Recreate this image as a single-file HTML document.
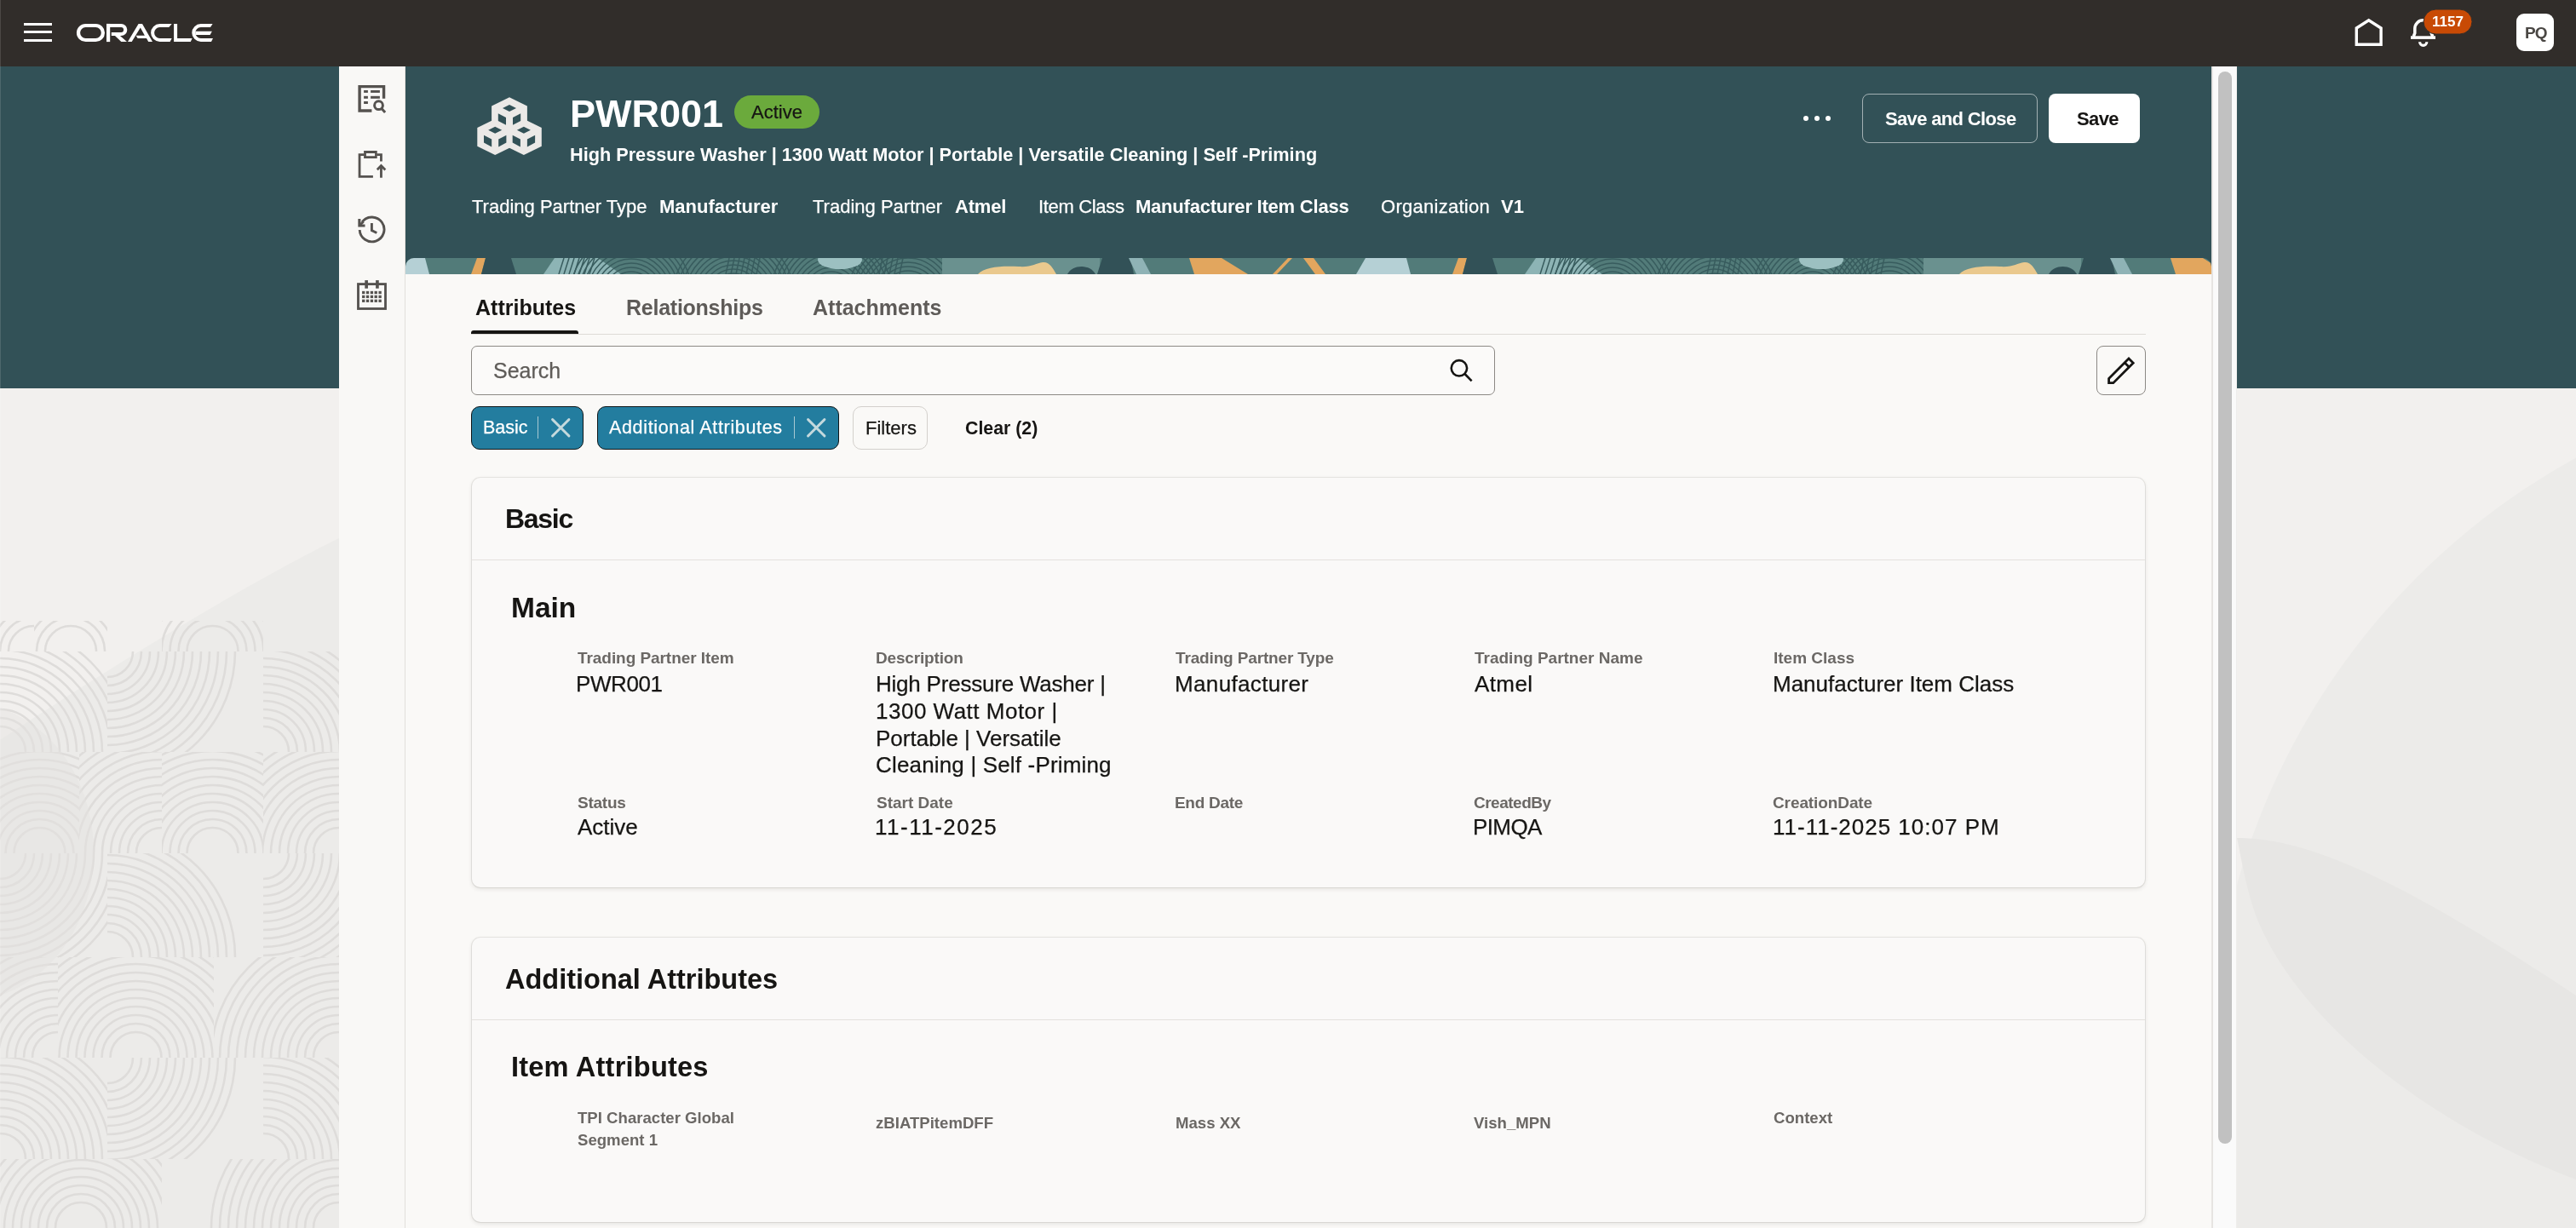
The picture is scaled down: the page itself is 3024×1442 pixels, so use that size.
<!DOCTYPE html>
<html><head><meta charset="utf-8"><title>PWR001</title>
<style>
html,body{margin:0;padding:0}
body{width:3024px;height:1442px;overflow:hidden;position:relative;background:#EDEBE9;font-family:"Liberation Sans",sans-serif}
.a{position:absolute}
.t{position:absolute;white-space:nowrap;line-height:1;-webkit-font-smoothing:antialiased;will-change:transform}
svg.a{overflow:visible}
</style></head><body>
<div class="a" style="left:0px;top:0px;width:3024px;height:78px;background:#312D2A"></div>
<div class="a" style="left:0px;top:78px;width:3024px;height:378px;background:#325157"></div>
<svg class="a" style="left:0;top:456px" width="398" height="986" viewBox="0 456 398 986"><rect x="0" y="456" width="398" height="986" fill="#F2F0EE"/><path d="M398,600 L398,632 C300,680 150,770 0,869 L0,1442 L398,1442 Z" fill="#ECEBE9"/><clipPath id="c0_729"><rect x="0" y="729" width="40" height="36"/></clipPath><g clip-path="url(#c0_729)" fill="none" stroke="#DEDCDA" stroke-width="2.6"><circle cx="40" cy="765" r="30"/><circle cx="40" cy="765" r="40"/><circle cx="40" cy="765" r="50"/><circle cx="40" cy="765" r="60"/><circle cx="40" cy="765" r="70"/><circle cx="40" cy="765" r="80"/><circle cx="40" cy="765" r="90"/><circle cx="40" cy="765" r="100"/><circle cx="40" cy="765" r="110"/><circle cx="40" cy="765" r="120"/><circle cx="40" cy="765" r="130"/><circle cx="40" cy="765" r="140"/><circle cx="40" cy="765" r="150"/></g><clipPath id="c40_729"><rect x="40" y="729" width="86" height="36"/></clipPath><g clip-path="url(#c40_729)" fill="none" stroke="#DEDCDA" stroke-width="2.6"><circle cx="83.0" cy="765" r="30"/><circle cx="83.0" cy="765" r="40"/><circle cx="83.0" cy="765" r="50"/><circle cx="83.0" cy="765" r="60"/><circle cx="83.0" cy="765" r="70"/><circle cx="83.0" cy="765" r="80"/><circle cx="83.0" cy="765" r="90"/><circle cx="83.0" cy="765" r="100"/><circle cx="83.0" cy="765" r="110"/><circle cx="83.0" cy="765" r="120"/><circle cx="83.0" cy="765" r="130"/><circle cx="83.0" cy="765" r="140"/><circle cx="83.0" cy="765" r="150"/></g><clipPath id="c190_729"><rect x="190" y="729" width="119" height="36"/></clipPath><g clip-path="url(#c190_729)" fill="none" stroke="#DEDCDA" stroke-width="2.6"><circle cx="249.5" cy="765" r="30"/><circle cx="249.5" cy="765" r="40"/><circle cx="249.5" cy="765" r="50"/><circle cx="249.5" cy="765" r="60"/><circle cx="249.5" cy="765" r="70"/><circle cx="249.5" cy="765" r="80"/><circle cx="249.5" cy="765" r="90"/><circle cx="249.5" cy="765" r="100"/><circle cx="249.5" cy="765" r="110"/><circle cx="249.5" cy="765" r="120"/><circle cx="249.5" cy="765" r="130"/><circle cx="249.5" cy="765" r="140"/><circle cx="249.5" cy="765" r="150"/></g><clipPath id="c0_765"><rect x="0" y="765" width="126" height="118"/></clipPath><g clip-path="url(#c0_765)" fill="none" stroke="#DEDCDA" stroke-width="2.6"><circle cx="0" cy="883" r="30"/><circle cx="0" cy="883" r="40"/><circle cx="0" cy="883" r="50"/><circle cx="0" cy="883" r="60"/><circle cx="0" cy="883" r="70"/><circle cx="0" cy="883" r="80"/><circle cx="0" cy="883" r="90"/><circle cx="0" cy="883" r="100"/><circle cx="0" cy="883" r="110"/><circle cx="0" cy="883" r="120"/><circle cx="0" cy="883" r="130"/><circle cx="0" cy="883" r="140"/><circle cx="0" cy="883" r="150"/></g><clipPath id="c126_765"><rect x="126" y="765" width="183" height="118"/></clipPath><g clip-path="url(#c126_765)" fill="none" stroke="#DEDCDA" stroke-width="2.6"><circle cx="126" cy="765" r="30"/><circle cx="126" cy="765" r="40"/><circle cx="126" cy="765" r="50"/><circle cx="126" cy="765" r="60"/><circle cx="126" cy="765" r="70"/><circle cx="126" cy="765" r="80"/><circle cx="126" cy="765" r="90"/><circle cx="126" cy="765" r="100"/><circle cx="126" cy="765" r="110"/><circle cx="126" cy="765" r="120"/><circle cx="126" cy="765" r="130"/><circle cx="126" cy="765" r="140"/><circle cx="126" cy="765" r="150"/></g><clipPath id="c309_765"><rect x="309" y="765" width="89" height="118"/></clipPath><g clip-path="url(#c309_765)" fill="none" stroke="#DEDCDA" stroke-width="2.6"><circle cx="309" cy="883" r="30"/><circle cx="309" cy="883" r="40"/><circle cx="309" cy="883" r="50"/><circle cx="309" cy="883" r="60"/><circle cx="309" cy="883" r="70"/><circle cx="309" cy="883" r="80"/><circle cx="309" cy="883" r="90"/><circle cx="309" cy="883" r="100"/><circle cx="309" cy="883" r="110"/><circle cx="309" cy="883" r="120"/><circle cx="309" cy="883" r="130"/><circle cx="309" cy="883" r="140"/><circle cx="309" cy="883" r="150"/></g><clipPath id="c0_883"><rect x="0" y="883" width="93" height="119"/></clipPath><g clip-path="url(#c0_883)" fill="none" stroke="#DEDCDA" stroke-width="2.6"><circle cx="46.5" cy="1002" r="30"/><circle cx="46.5" cy="1002" r="40"/><circle cx="46.5" cy="1002" r="50"/><circle cx="46.5" cy="1002" r="60"/><circle cx="46.5" cy="1002" r="70"/><circle cx="46.5" cy="1002" r="80"/><circle cx="46.5" cy="1002" r="90"/><circle cx="46.5" cy="1002" r="100"/><circle cx="46.5" cy="1002" r="110"/><circle cx="46.5" cy="1002" r="120"/><circle cx="46.5" cy="1002" r="130"/><circle cx="46.5" cy="1002" r="140"/><circle cx="46.5" cy="1002" r="150"/></g><clipPath id="c93_883"><rect x="93" y="883" width="97" height="119"/></clipPath><g clip-path="url(#c93_883)" fill="none" stroke="#DEDCDA" stroke-width="2.6"><circle cx="190" cy="1002" r="30"/><circle cx="190" cy="1002" r="40"/><circle cx="190" cy="1002" r="50"/><circle cx="190" cy="1002" r="60"/><circle cx="190" cy="1002" r="70"/><circle cx="190" cy="1002" r="80"/><circle cx="190" cy="1002" r="90"/><circle cx="190" cy="1002" r="100"/><circle cx="190" cy="1002" r="110"/><circle cx="190" cy="1002" r="120"/><circle cx="190" cy="1002" r="130"/><circle cx="190" cy="1002" r="140"/><circle cx="190" cy="1002" r="150"/></g><clipPath id="c190_883"><rect x="190" y="883" width="119" height="119"/></clipPath><g clip-path="url(#c190_883)" fill="none" stroke="#DEDCDA" stroke-width="2.6"><circle cx="249.5" cy="1002" r="30"/><circle cx="249.5" cy="1002" r="40"/><circle cx="249.5" cy="1002" r="50"/><circle cx="249.5" cy="1002" r="60"/><circle cx="249.5" cy="1002" r="70"/><circle cx="249.5" cy="1002" r="80"/><circle cx="249.5" cy="1002" r="90"/><circle cx="249.5" cy="1002" r="100"/><circle cx="249.5" cy="1002" r="110"/><circle cx="249.5" cy="1002" r="120"/><circle cx="249.5" cy="1002" r="130"/><circle cx="249.5" cy="1002" r="140"/><circle cx="249.5" cy="1002" r="150"/></g><clipPath id="c309_883"><rect x="309" y="883" width="89" height="119"/></clipPath><g clip-path="url(#c309_883)" fill="none" stroke="#DEDCDA" stroke-width="2.6"><circle cx="398" cy="1002" r="30"/><circle cx="398" cy="1002" r="40"/><circle cx="398" cy="1002" r="50"/><circle cx="398" cy="1002" r="60"/><circle cx="398" cy="1002" r="70"/><circle cx="398" cy="1002" r="80"/><circle cx="398" cy="1002" r="90"/><circle cx="398" cy="1002" r="100"/><circle cx="398" cy="1002" r="110"/><circle cx="398" cy="1002" r="120"/><circle cx="398" cy="1002" r="130"/><circle cx="398" cy="1002" r="140"/><circle cx="398" cy="1002" r="150"/></g><clipPath id="c0_1002"><rect x="0" y="1002" width="126" height="122"/></clipPath><g clip-path="url(#c0_1002)" fill="none" stroke="#DEDCDA" stroke-width="2.6"><circle cx="0" cy="1002" r="30"/><circle cx="0" cy="1002" r="40"/><circle cx="0" cy="1002" r="50"/><circle cx="0" cy="1002" r="60"/><circle cx="0" cy="1002" r="70"/><circle cx="0" cy="1002" r="80"/><circle cx="0" cy="1002" r="90"/><circle cx="0" cy="1002" r="100"/><circle cx="0" cy="1002" r="110"/><circle cx="0" cy="1002" r="120"/><circle cx="0" cy="1002" r="130"/><circle cx="0" cy="1002" r="140"/><circle cx="0" cy="1002" r="150"/></g><clipPath id="c126_1002"><rect x="126" y="1002" width="183" height="122"/></clipPath><g clip-path="url(#c126_1002)" fill="none" stroke="#DEDCDA" stroke-width="2.6"><circle cx="126" cy="1124" r="30"/><circle cx="126" cy="1124" r="40"/><circle cx="126" cy="1124" r="50"/><circle cx="126" cy="1124" r="60"/><circle cx="126" cy="1124" r="70"/><circle cx="126" cy="1124" r="80"/><circle cx="126" cy="1124" r="90"/><circle cx="126" cy="1124" r="100"/><circle cx="126" cy="1124" r="110"/><circle cx="126" cy="1124" r="120"/><circle cx="126" cy="1124" r="130"/><circle cx="126" cy="1124" r="140"/><circle cx="126" cy="1124" r="150"/></g><clipPath id="c309_1002"><rect x="309" y="1002" width="89" height="122"/></clipPath><g clip-path="url(#c309_1002)" fill="none" stroke="#DEDCDA" stroke-width="2.6"><circle cx="309" cy="1002" r="30"/><circle cx="309" cy="1002" r="40"/><circle cx="309" cy="1002" r="50"/><circle cx="309" cy="1002" r="60"/><circle cx="309" cy="1002" r="70"/><circle cx="309" cy="1002" r="80"/><circle cx="309" cy="1002" r="90"/><circle cx="309" cy="1002" r="100"/><circle cx="309" cy="1002" r="110"/><circle cx="309" cy="1002" r="120"/><circle cx="309" cy="1002" r="130"/><circle cx="309" cy="1002" r="140"/><circle cx="309" cy="1002" r="150"/></g><clipPath id="c0_1124"><rect x="0" y="1124" width="68" height="118"/></clipPath><g clip-path="url(#c0_1124)" fill="none" stroke="#DEDCDA" stroke-width="2.6"><circle cx="68" cy="1242" r="30"/><circle cx="68" cy="1242" r="40"/><circle cx="68" cy="1242" r="50"/><circle cx="68" cy="1242" r="60"/><circle cx="68" cy="1242" r="70"/><circle cx="68" cy="1242" r="80"/><circle cx="68" cy="1242" r="90"/><circle cx="68" cy="1242" r="100"/><circle cx="68" cy="1242" r="110"/><circle cx="68" cy="1242" r="120"/><circle cx="68" cy="1242" r="130"/><circle cx="68" cy="1242" r="140"/><circle cx="68" cy="1242" r="150"/></g><clipPath id="c68_1124"><rect x="68" y="1124" width="183" height="118"/></clipPath><g clip-path="url(#c68_1124)" fill="none" stroke="#DEDCDA" stroke-width="2.6"><circle cx="159.5" cy="1242" r="30"/><circle cx="159.5" cy="1242" r="40"/><circle cx="159.5" cy="1242" r="50"/><circle cx="159.5" cy="1242" r="60"/><circle cx="159.5" cy="1242" r="70"/><circle cx="159.5" cy="1242" r="80"/><circle cx="159.5" cy="1242" r="90"/><circle cx="159.5" cy="1242" r="100"/><circle cx="159.5" cy="1242" r="110"/><circle cx="159.5" cy="1242" r="120"/><circle cx="159.5" cy="1242" r="130"/><circle cx="159.5" cy="1242" r="140"/><circle cx="159.5" cy="1242" r="150"/></g><clipPath id="c251_1124"><rect x="251" y="1124" width="147" height="118"/></clipPath><g clip-path="url(#c251_1124)" fill="none" stroke="#DEDCDA" stroke-width="2.6"><circle cx="398" cy="1242" r="30"/><circle cx="398" cy="1242" r="40"/><circle cx="398" cy="1242" r="50"/><circle cx="398" cy="1242" r="60"/><circle cx="398" cy="1242" r="70"/><circle cx="398" cy="1242" r="80"/><circle cx="398" cy="1242" r="90"/><circle cx="398" cy="1242" r="100"/><circle cx="398" cy="1242" r="110"/><circle cx="398" cy="1242" r="120"/><circle cx="398" cy="1242" r="130"/><circle cx="398" cy="1242" r="140"/><circle cx="398" cy="1242" r="150"/></g><clipPath id="c0_1242"><rect x="0" y="1242" width="126" height="119"/></clipPath><g clip-path="url(#c0_1242)" fill="none" stroke="#DEDCDA" stroke-width="2.6"><circle cx="0" cy="1361" r="30"/><circle cx="0" cy="1361" r="40"/><circle cx="0" cy="1361" r="50"/><circle cx="0" cy="1361" r="60"/><circle cx="0" cy="1361" r="70"/><circle cx="0" cy="1361" r="80"/><circle cx="0" cy="1361" r="90"/><circle cx="0" cy="1361" r="100"/><circle cx="0" cy="1361" r="110"/><circle cx="0" cy="1361" r="120"/><circle cx="0" cy="1361" r="130"/><circle cx="0" cy="1361" r="140"/><circle cx="0" cy="1361" r="150"/></g><clipPath id="c126_1242"><rect x="126" y="1242" width="183" height="119"/></clipPath><g clip-path="url(#c126_1242)" fill="none" stroke="#DEDCDA" stroke-width="2.6"><circle cx="126" cy="1242" r="30"/><circle cx="126" cy="1242" r="40"/><circle cx="126" cy="1242" r="50"/><circle cx="126" cy="1242" r="60"/><circle cx="126" cy="1242" r="70"/><circle cx="126" cy="1242" r="80"/><circle cx="126" cy="1242" r="90"/><circle cx="126" cy="1242" r="100"/><circle cx="126" cy="1242" r="110"/><circle cx="126" cy="1242" r="120"/><circle cx="126" cy="1242" r="130"/><circle cx="126" cy="1242" r="140"/><circle cx="126" cy="1242" r="150"/></g><clipPath id="c309_1242"><rect x="309" y="1242" width="89" height="119"/></clipPath><g clip-path="url(#c309_1242)" fill="none" stroke="#DEDCDA" stroke-width="2.6"><circle cx="309" cy="1361" r="30"/><circle cx="309" cy="1361" r="40"/><circle cx="309" cy="1361" r="50"/><circle cx="309" cy="1361" r="60"/><circle cx="309" cy="1361" r="70"/><circle cx="309" cy="1361" r="80"/><circle cx="309" cy="1361" r="90"/><circle cx="309" cy="1361" r="100"/><circle cx="309" cy="1361" r="110"/><circle cx="309" cy="1361" r="120"/><circle cx="309" cy="1361" r="130"/><circle cx="309" cy="1361" r="140"/><circle cx="309" cy="1361" r="150"/></g><clipPath id="c0_1361"><rect x="0" y="1361" width="190" height="81"/></clipPath><g clip-path="url(#c0_1361)" fill="none" stroke="#DEDCDA" stroke-width="2.6"><circle cx="95.0" cy="1442" r="30"/><circle cx="95.0" cy="1442" r="40"/><circle cx="95.0" cy="1442" r="50"/><circle cx="95.0" cy="1442" r="60"/><circle cx="95.0" cy="1442" r="70"/><circle cx="95.0" cy="1442" r="80"/><circle cx="95.0" cy="1442" r="90"/><circle cx="95.0" cy="1442" r="100"/><circle cx="95.0" cy="1442" r="110"/><circle cx="95.0" cy="1442" r="120"/><circle cx="95.0" cy="1442" r="130"/><circle cx="95.0" cy="1442" r="140"/><circle cx="95.0" cy="1442" r="150"/></g><clipPath id="c190_1361"><rect x="190" y="1361" width="208" height="81"/></clipPath><g clip-path="url(#c190_1361)" fill="none" stroke="#DEDCDA" stroke-width="2.6"><circle cx="398" cy="1442" r="30"/><circle cx="398" cy="1442" r="40"/><circle cx="398" cy="1442" r="50"/><circle cx="398" cy="1442" r="60"/><circle cx="398" cy="1442" r="70"/><circle cx="398" cy="1442" r="80"/><circle cx="398" cy="1442" r="90"/><circle cx="398" cy="1442" r="100"/><circle cx="398" cy="1442" r="110"/><circle cx="398" cy="1442" r="120"/><circle cx="398" cy="1442" r="130"/><circle cx="398" cy="1442" r="140"/><circle cx="398" cy="1442" r="150"/></g><ellipse cx="-40" cy="1000" rx="150" ry="175" fill="#E4E3E1" opacity="0.45"/></svg>
<svg class="a" style="left:2626px;top:456px" width="398" height="986" viewBox="2626 456 398 986"><rect x="2626" y="456" width="398" height="986" fill="#F2F0EE"/><circle cx="3423" cy="1263" r="828" fill="#ECEBE9"/><path d="M2626,984 C2700,984 2800,1020 3024,1169 L3024,1385 C2850,1320 2700,1200 2650,1080 C2635,1040 2630,1000 2626,984 Z" fill="#E7E6E4"/></svg>
<div class="a" style="left:398px;top:78px;width:78px;height:1364px;background:#F9F8F6;border-right:1px solid #E2DFDB;box-sizing:border-box"></div>
<div class="a" style="left:476px;top:322px;width:2120px;height:1120px;background:#FAF9F7"></div>
<div class="a" style="left:2596px;top:78px;width:30px;height:1364px;background:#FAFAFA;border-left:2px solid #E6E4E2;border-right:1px solid #EEEDEB;box-sizing:border-box"></div>
<div class="a" style="left:2604px;top:84px;width:16px;height:1259px;background:#C1C1C1;border-radius:8px"></div>
<svg class="a" style="left:476px;top:303px" width="2120" height="19" viewBox="0 0 2120 19">
<defs><clipPath id="bc"><path d="M0,19 V10 A10,10 0 0 1 10,0 H2110 A10,10 0 0 1 2120,10 V19 Z"/></clipPath></defs>
<g clip-path="url(#bc)">
<rect width="2120" height="19" fill="#527B79"/>
<g id="tile">
<polygon points="-25,0 23,0 28,19 -36,19" fill="#B5D0D5"/>
<polygon points="84,0 94,0 89,19 77,19" fill="#E2A65E"/>
<polygon points="94,0 124,0 130,19 89,19" fill="#325157"/>
<polygon points="162,19 175,0 226,0 253,19" fill="#8DB4B5"/>
<g fill="none" stroke="#385C5E" stroke-width="1.5">
<path d="M180,19 L186,0 M186,19 L192,0 M192,19 L198,0 M198,19 L204,0 M204,19 L210,0 M210,19 L216,0 M216,19 L222,0"/>
<circle cx="265" cy="42" r="26"/><circle cx="265" cy="42" r="31"/><circle cx="265" cy="42" r="36"/><circle cx="265" cy="42" r="41"/><circle cx="265" cy="42" r="46"/><circle cx="265" cy="42" r="51"/><circle cx="265" cy="42" r="56"/><circle cx="265" cy="42" r="61"/><circle cx="265" cy="42" r="66"/><circle cx="265" cy="42" r="71"/><circle cx="385" cy="44" r="26"/><circle cx="385" cy="44" r="31"/><circle cx="385" cy="44" r="36"/><circle cx="385" cy="44" r="41"/><circle cx="385" cy="44" r="46"/><circle cx="385" cy="44" r="51"/><circle cx="385" cy="44" r="56"/><circle cx="385" cy="44" r="61"/><circle cx="385" cy="44" r="66"/><circle cx="385" cy="44" r="71"/><circle cx="500" cy="42" r="26"/><circle cx="500" cy="42" r="31"/><circle cx="500" cy="42" r="36"/><circle cx="500" cy="42" r="41"/><circle cx="500" cy="42" r="46"/><circle cx="500" cy="42" r="51"/><circle cx="500" cy="42" r="56"/><circle cx="500" cy="42" r="61"/><circle cx="500" cy="42" r="66"/><circle cx="500" cy="42" r="71"/><circle cx="590" cy="46" r="26"/><circle cx="590" cy="46" r="31"/><circle cx="590" cy="46" r="36"/><circle cx="590" cy="46" r="41"/><circle cx="590" cy="46" r="46"/><circle cx="590" cy="46" r="51"/><circle cx="590" cy="46" r="56"/><circle cx="590" cy="46" r="61"/><circle cx="590" cy="46" r="66"/><circle cx="590" cy="46" r="71"/>
<path d="M380,0 L376,19 M386,0 L382,19 M392,0 L388,19 M398,0 L394,19 M404,0 L400,19 M410,0 L406,19 M416,0 L412,19"/>
<path d="M560,0 L556,19 M566,0 L562,19 M572,0 L568,19 M578,0 L574,19 M584,0 L580,19"/>
</g>
<ellipse cx="510" cy="2" rx="26" ry="11" fill="#9CC0C1"/>
<rect x="630" y="0" width="185" height="19" fill="#6A918F"/>
<path d="M672,19 C680,10 700,9 720,10 C735,11 740,6 748,5 C756,4 760,12 764,19 Z" fill="#EAC98E"/>
<path d="M777,19 C783,7 804,7 810,19 Z" fill="#325157"/>
<polygon points="818,0 851,0 855,19 812,19" fill="#325157"/>
<polygon points="849,0 865,0 875,19 858,19" fill="#8FB3B6"/>
<polygon points="920,0 958,0 989,19 926,19" fill="#E2A65E"/>
<polygon points="1036,0 1041,0 1023,19 1018,19" fill="#E2A65E"/>
<polygon points="1054,0 1066,0 1080,19 1068,19" fill="#E2A65E"/>
</g>
<use href="#tile" x="1152"/>
</g></svg>
<div class="a" style="left:28px;top:26.5px;width:33px;height:3.1999999999999993px;background:#fff"></div>
<div class="a" style="left:28px;top:36.3px;width:33px;height:3.200000000000003px;background:#fff"></div>
<div class="a" style="left:28px;top:46px;width:33px;height:3.200000000000003px;background:#fff"></div>
<svg class="a" style="left:0;top:0" width="260" height="78" viewBox="0 0 260 78" fill="#fff">
<rect x="92" y="30" width="28.9" height="17" rx="8.5" fill="none" stroke="#fff" stroke-width="4.2"/>
<rect x="125" y="27.9" width="4.2" height="21.2"/>
<path d="M125,30 H142.2 A5,5 0 0 1 142.2,40 H130.8" fill="none" stroke="#fff" stroke-width="4.2"/>
<polygon points="130.8,37.9 136.3,37.9 149,49.1 142.3,49.1"/>
<polygon points="150,49.1 162.6,28.1 167,28.1 179,49.1 174.2,49.1 172,45.1 161.6,45.1 159.6,41.7 169.9,41.7 164.8,32.6 154.7,49.1"/>
<path d="M201.7,28.1 H187.5 A10.4,10.4 0 0 0 187.5,48.9 H199.6 L201.7,44.9 H187.5 A6.4,6.4 0 0 1 187.5,32.1 H198.3 Z"/>
<path d="M204.1,28.1 H208.1 V44.9 H225.6 L223.8,48.9 H204.1 Z"/>
<path d="M249.6,28.1 H235.7 A10.4,10.4 0 0 0 235.7,48.9 H248 L250,44.9 H235.7 A6.4,6.4 0 0 1 235.7,32.1 H247 Z"/>
<path d="M229.3,36.7 H248.9 L246.6,41 H229.3 Z"/>
</svg>
<svg class="a" style="left:2740px;top:0" width="284" height="78" viewBox="2740 0 284 78">
<path d="M2766.3,52.3 V33 L2780.7,23.7 L2795.1,33 V52.3 Z" fill="none" stroke="#fff" stroke-width="3.4"/>
<path d="M2830,44.1 H2859" stroke="#fff" stroke-width="3.6"/><path d="M2833.2,43 L2834.8,39 V33.5 A9.7,9.7 0 0 1 2854.2,33.5 V39 L2855.8,43" fill="none" stroke="#fff" stroke-width="3.5"/>
<path d="M2840.6,49.2 A4.1,4.1 0 0 0 2848.8,49.2" fill="none" stroke="#fff" stroke-width="3.2"/>
<rect x="2845" y="11" width="57" height="29" rx="14.5" fill="#C84A05" stroke="#312D2A" stroke-width="1"/>
</svg>
<div class="t" style="left:2855.0px;top:17.3px;font-size:17px;font-weight:700;color:#fff;">1157</div>
<div class="a" style="left:2954px;top:16px;width:44px;height:44px;background:#fff;border-radius:9px"></div>
<div class="t" style="left:2964.0px;top:29.4px;font-size:19px;font-weight:700;color:#4A4744;letter-spacing:-1px">PQ</div>
<svg class="a" style="left:412px;top:92px" width="50" height="50" viewBox="0 0 50 50" fill="#55524F">
<path d="M24.4,38.05 H10.1 V9.65 H38.55 V23.8" fill="none" stroke="#55524F" stroke-width="3.4"/>
<rect x="15.1" y="14" width="4.8" height="2.9"/><rect x="23.1" y="14" width="10.8" height="2.9"/>
<rect x="15.1" y="20.8" width="4.8" height="3"/><rect x="23.1" y="20.8" width="10.8" height="3"/>
<rect x="15.1" y="27" width="4.8" height="3"/>
<circle cx="32.5" cy="31.7" r="4.9" fill="none" stroke="#55524F" stroke-width="3"/>
<path d="M35.8,35.2 L40.1,39.9" stroke="#55524F" stroke-width="3"/>
</svg>
<svg class="a" style="left:412px;top:168px" width="50" height="50" viewBox="0 0 50 50" fill="#55524F">
<path d="M25.9,39.4 H10.05 V13.55 H15.5 M30.3,13.55 H35.45 V21.6" fill="none" stroke="#55524F" stroke-width="2.8"/>
<path d="M15.1,9 H30.7 V17.9 H15.1 Z M17.9,12 V15.3 H28.1 V12 Z" fill-rule="evenodd"/>
<path d="M35.45,26.5 V40.7" stroke="#55524F" stroke-width="2.8"/>
<path d="M30.8,31.3 L35.45,26.6 L40.3,31.4" fill="none" stroke="#55524F" stroke-width="2.8"/>
</svg>
<svg class="a" style="left:412px;top:244px" width="50" height="50" viewBox="0 0 50 50" fill="#55524F">
<path d="M10.2,26 A14.4,14.4 0 1 0 13.2,16.6" fill="none" stroke="#55524F" stroke-width="2.9"/>
<path d="M8.35,13 H11.4 V19.5 H16.5 V22.4 H8.35 Z"/><path d="M9.9,20.9 L14.6,16.2" stroke="#55524F" stroke-width="2.9"/>
<path d="M24.4,18 V26.5 L30.3,29.5" fill="none" stroke="#55524F" stroke-width="2.9"/>
</svg>
<svg class="a" style="left:412px;top:322px" width="50" height="50" viewBox="0 0 50 50" fill="#55524F">
<rect x="8.5" y="11.6" width="32" height="28.9" fill="none" stroke="#55524F" stroke-width="2.85"/>
<rect x="16.3" y="7.1" width="3.65" height="9.6"/><rect x="29.1" y="7.1" width="3.65" height="9.6"/>
<rect x="13.049999999999999" y="19.85" width="3.3" height="3.3"/><rect x="13.049999999999999" y="24.75" width="3.3" height="3.3"/><rect x="13.049999999999999" y="29.650000000000002" width="3.3" height="3.3"/><rect x="17.85" y="19.85" width="3.3" height="3.3"/><rect x="17.85" y="24.75" width="3.3" height="3.3"/><rect x="17.85" y="29.650000000000002" width="3.3" height="3.3"/><rect x="22.75" y="19.85" width="3.3" height="3.3"/><rect x="22.75" y="24.75" width="3.3" height="3.3"/><rect x="22.75" y="29.650000000000002" width="3.3" height="3.3"/><rect x="27.55" y="19.85" width="3.3" height="3.3"/><rect x="27.55" y="24.75" width="3.3" height="3.3"/><rect x="27.55" y="29.650000000000002" width="3.3" height="3.3"/><rect x="32.45" y="19.85" width="3.3" height="3.3"/><rect x="32.45" y="24.75" width="3.3" height="3.3"/><rect x="32.45" y="29.650000000000002" width="3.3" height="3.3"/>
</svg>
<svg class="a" style="left:550px;top:105px" width="100" height="90" viewBox="0 0 100 90"><polygon points="48,9.2 68.9,19.5 68.9,41.1 48,51.400000000000006 27.1,41.1 27.1,19.5" fill="#EBE9E7"/><polygon points="31.2,34.8 52.099999999999994,45.099999999999994 52.099999999999994,66.7 31.2,77.0 10.3,66.7 10.3,45.099999999999994" fill="#EBE9E7"/><polygon points="64.9,34.8 85.80000000000001,45.099999999999994 85.80000000000001,66.7 64.9,77.0 44.00000000000001,66.7 44.00000000000001,45.099999999999994" fill="#EBE9E7"/><g fill="#325157"><polygon points="40,22.05 48,18.05 56,22.05 48,26.05"/><polygon points="34.8,28.2 44,33.0 44,41.8 34.8,37.0"/><polygon points="52,33.0 61.2,28.2 61.2,37.0 52,41.8"/><polygon points="23.2,47.65 31.2,43.65 39.2,47.65 31.2,51.65"/><polygon points="18.0,53.8 27.2,58.6 27.2,67.4 18.0,62.6"/><polygon points="35.2,58.6 44.4,53.8 44.4,62.6 35.2,67.4"/><polygon points="56.900000000000006,47.65 64.9,43.65 72.9,47.65 64.9,51.65"/><polygon points="51.7,53.8 60.900000000000006,58.6 60.900000000000006,67.4 51.7,62.6"/><polygon points="68.9,58.6 78.10000000000001,53.8 78.10000000000001,62.6 68.9,67.4"/></g></svg>
<div class="t" style="left:669.0px;top:111.4px;font-size:45px;font-weight:700;color:#fff;">PWR001</div>
<div class="a" style="left:862px;top:112px;width:100px;height:39px;background:#6BAA3C;border-radius:20px"></div>
<div class="t" style="left:881.6px;top:121.1px;font-size:22px;-webkit-text-stroke:0.25px currentColor;color:#161513;">Active</div>
<div class="t" style="left:669.0px;top:171.1px;font-size:21.7px;font-weight:700;color:#fff;">High Pressure Washer | 1300 Watt Motor | Portable | Versatile Cleaning | Self -Priming</div>
<div class="t" style="left:554.0px;top:231.9px;font-size:22px;-webkit-text-stroke:0.25px currentColor;color:#fff;">Trading Partner Type</div>
<div class="t" style="left:774.0px;top:231.9px;font-size:22px;font-weight:700;color:#fff;">Manufacturer</div>
<div class="t" style="left:954.0px;top:231.9px;font-size:22px;-webkit-text-stroke:0.25px currentColor;color:#fff;">Trading Partner</div>
<div class="t" style="left:1120.5px;top:231.9px;font-size:22px;font-weight:700;color:#fff;letter-spacing:-0.2px">Atmel</div>
<div class="t" style="left:1219.0px;top:231.9px;font-size:22px;-webkit-text-stroke:0.25px currentColor;color:#fff;letter-spacing:-0.33px">Item Class</div>
<div class="t" style="left:1333.0px;top:231.9px;font-size:22px;font-weight:700;color:#fff;letter-spacing:-0.22px">Manufacturer Item Class</div>
<div class="t" style="left:1621.0px;top:231.9px;font-size:22px;-webkit-text-stroke:0.25px currentColor;color:#fff;letter-spacing:0.27px">Organization</div>
<div class="t" style="left:1762.0px;top:231.9px;font-size:22px;font-weight:700;color:#fff;">V1</div>
<div class="a" style="left:2117px;top:135.6px;width:6px;height:6.0px;background:#fff;border-radius:50%"></div>
<div class="a" style="left:2130px;top:135.6px;width:6px;height:6.0px;background:#fff;border-radius:50%"></div>
<div class="a" style="left:2143px;top:135.6px;width:6px;height:6.0px;background:#fff;border-radius:50%"></div>
<div class="a" style="left:2186px;top:110px;width:206px;height:58px;border:1px solid rgba(255,255,255,0.55);border-radius:8px;box-sizing:border-box"></div>
<div class="t" style="left:2212.5px;top:128.9px;font-size:22px;font-weight:700;color:#fff;letter-spacing:-0.65px">Save and Close</div>
<div class="a" style="left:2405px;top:110px;width:107px;height:58px;background:#fff;border-radius:8px"></div>
<div class="t" style="left:2437.5px;top:128.9px;font-size:22px;font-weight:700;color:#161513;letter-spacing:-0.6px">Save</div>
<div class="t" style="left:557.5px;top:349.3px;font-size:25px;font-weight:700;color:#161513;">Attributes</div>
<div class="t" style="left:734.5px;top:349.3px;font-size:25px;font-weight:700;color:#5E5B58;letter-spacing:-0.25px">Relationships</div>
<div class="t" style="left:954.0px;top:349.3px;font-size:25px;font-weight:700;color:#5E5B58;">Attachments</div>
<div class="a" style="left:553px;top:392px;width:1966px;height:1px;background:#DEDBD7"></div>
<div class="a" style="left:553px;top:388px;width:126px;height:4px;background:#161513;border-radius:3px 3px 0 0"></div>
<div class="a" style="left:553px;top:406px;width:1202px;height:58px;border:1px solid #8C8985;border-radius:7px;box-sizing:border-box;background:#FBFAF9"></div>
<div class="t" style="left:579.0px;top:422.9px;font-size:25px;-webkit-text-stroke:0.25px currentColor;color:#5F5C59;">Search</div>
<svg class="a" style="left:1695px;top:415px" width="40" height="40" viewBox="1695 415 40 40">
<circle cx="1712.9" cy="432.3" r="9.2" fill="none" stroke="#161513" stroke-width="2.6"/>
<path d="M1719.5,439 L1727.6,447.3" stroke="#161513" stroke-width="2.6"/></svg>
<div class="a" style="left:2461px;top:406px;width:58px;height:58px;border:1px solid #8C8985;border-radius:8px;box-sizing:border-box"></div>
<svg class="a" style="left:2461px;top:406px" width="58" height="58" viewBox="2461 406 58 58">
<path d="M2475.6,444.5 L2499,421.1 L2504.2,426.3 L2480.8,449.7 H2475.6 Z" fill="none" stroke="#161513" stroke-width="2.8" stroke-linejoin="miter"/>
<path d="M2494.2,425.9 L2499.4,431.1" stroke="#161513" stroke-width="2.8"/></svg>
<div class="a" style="left:553px;top:477px;width:132px;height:50.5px;background:#237D9F;border:1px solid #101618;border-radius:10px;box-sizing:border-box"></div>
<div class="t" style="left:567.0px;top:492.3px;font-size:21.5px;-webkit-text-stroke:0.25px currentColor;color:#fff;">Basic</div>
<div class="a" style="left:631px;top:489px;width:1.2000000000000455px;height:25.600000000000023px;background:#A9C9D3"></div>
<svg class="a" style="left:646.8px;top:491px" width="23" height="23" viewBox="0 0 23 23"><path d="M1.6,1.6 L20.9,20.9 M20.9,1.6 L1.6,20.9" stroke="#C4D9DD" stroke-width="2.9" stroke-linecap="round"/></svg>
<div class="a" style="left:701px;top:477px;width:284px;height:50.5px;background:#237D9F;border:1px solid #101618;border-radius:10px;box-sizing:border-box"></div>
<div class="t" style="left:714.6px;top:492.3px;font-size:21.5px;-webkit-text-stroke:0.25px currentColor;color:#fff;letter-spacing:0.65px">Additional Attributes</div>
<div class="a" style="left:932px;top:489px;width:1.2000000000000455px;height:25.600000000000023px;background:#A9C9D3"></div>
<svg class="a" style="left:947px;top:491px" width="23" height="23" viewBox="0 0 23 23"><path d="M1.6,1.6 L20.9,20.9 M20.9,1.6 L1.6,20.9" stroke="#C4D9DD" stroke-width="2.9" stroke-linecap="round"/></svg>
<div class="a" style="left:1001px;top:477px;width:88px;height:51px;border:1px solid #D3D0CC;border-radius:10px;box-sizing:border-box"></div>
<div class="t" style="left:1016.0px;top:491.9px;font-size:22px;-webkit-text-stroke:0.25px currentColor;color:#161513;">Filters</div>
<div class="t" style="left:1132.7px;top:492.5px;font-size:21.3px;font-weight:700;color:#161513;">Clear (2)</div>
<div class="a" style="left:554px;top:561px;width:1964px;height:481px;background:#FAF9F8;border-radius:10px;box-shadow:0 0 0 1px rgba(60,50,40,0.09),0 2px 5px rgba(60,50,40,0.12)"></div>
<div class="a" style="left:554px;top:657px;width:1964px;height:1px;background:#E4E1DD"></div>
<div class="a" style="left:554px;top:1101px;width:1964px;height:334px;background:#FAF9F8;border-radius:10px;box-shadow:0 0 0 1px rgba(60,50,40,0.09),0 2px 5px rgba(60,50,40,0.12)"></div>
<div class="a" style="left:554px;top:1197px;width:1964px;height:1px;background:#E4E1DD"></div>
<div class="t" style="left:592.5px;top:593.4px;font-size:32px;font-weight:700;color:#161513;letter-spacing:-1.3px">Basic</div>
<div class="t" style="left:600.2px;top:696.5px;font-size:33.5px;font-weight:700;color:#161513;">Main</div>
<div class="t" style="left:677.7px;top:763.4px;font-size:19px;font-weight:700;color:#6B6865;letter-spacing:-0.06px">Trading Partner Item</div>
<div class="t" style="left:1027.8px;top:763.4px;font-size:19px;font-weight:700;color:#6B6865;letter-spacing:-0.17px">Description</div>
<div class="t" style="left:1380.4px;top:763.4px;font-size:19px;font-weight:700;color:#6B6865;letter-spacing:-0.15px">Trading Partner Type</div>
<div class="t" style="left:1731.0px;top:763.4px;font-size:19px;font-weight:700;color:#6B6865;">Trading Partner Name</div>
<div class="t" style="left:2082.2px;top:763.4px;font-size:19px;font-weight:700;color:#6B6865;">Item Class</div>
<div class="t" style="left:676.4px;top:790.2px;font-size:26px;-webkit-text-stroke:0.25px currentColor;color:#161513;letter-spacing:-0.4px">PWR001</div>
<div class="t" style="left:1379.1px;top:790.2px;font-size:26px;-webkit-text-stroke:0.25px currentColor;color:#161513;letter-spacing:0.35px">Manufacturer</div>
<div class="t" style="left:1731.0px;top:790.2px;font-size:26px;-webkit-text-stroke:0.25px currentColor;color:#161513;letter-spacing:0.4px">Atmel</div>
<div class="t" style="left:2080.9px;top:790.2px;font-size:26px;-webkit-text-stroke:0.25px currentColor;color:#161513;">Manufacturer Item Class</div>
<div class="t" style="left:1027.6px;top:790.2px;font-size:26px;-webkit-text-stroke:0.25px currentColor;color:#161513;letter-spacing:-0.22px">High Pressure Washer |</div>
<div class="t" style="left:1027.6px;top:821.7px;font-size:26px;-webkit-text-stroke:0.25px currentColor;color:#161513;letter-spacing:0.5px">1300 Watt Motor |</div>
<div class="t" style="left:1027.6px;top:853.5px;font-size:26px;-webkit-text-stroke:0.25px currentColor;color:#161513;">Portable | Versatile</div>
<div class="t" style="left:1027.6px;top:885.3px;font-size:26px;-webkit-text-stroke:0.25px currentColor;color:#161513;letter-spacing:0.17px">Cleaning | Self -Priming</div>
<div class="t" style="left:677.7px;top:933.4px;font-size:19px;font-weight:700;color:#6B6865;letter-spacing:-0.25px">Status</div>
<div class="t" style="left:1028.8px;top:933.4px;font-size:19px;font-weight:700;color:#6B6865;">Start Date</div>
<div class="t" style="left:1379.4px;top:933.4px;font-size:19px;font-weight:700;color:#6B6865;letter-spacing:-0.3px">End Date</div>
<div class="t" style="left:1730.0px;top:933.4px;font-size:19px;font-weight:700;color:#6B6865;letter-spacing:-0.5px">CreatedBy</div>
<div class="t" style="left:2081.2px;top:933.4px;font-size:19px;font-weight:700;color:#6B6865;letter-spacing:-0.1px">CreationDate</div>
<div class="t" style="left:677.7px;top:958.1px;font-size:26px;-webkit-text-stroke:0.25px currentColor;color:#161513;">Active</div>
<div class="t" style="left:1027.2px;top:958.1px;font-size:26px;-webkit-text-stroke:0.25px currentColor;color:#161513;letter-spacing:1.5px">11-11-2025</div>
<div class="t" style="left:1729.4px;top:958.1px;font-size:26px;-webkit-text-stroke:0.25px currentColor;color:#161513;letter-spacing:-0.6px">PIMQA</div>
<div class="t" style="left:2080.6px;top:958.1px;font-size:26px;-webkit-text-stroke:0.25px currentColor;color:#161513;letter-spacing:1px">11-11-2025 10:07 PM</div>
<div class="t" style="left:593.0px;top:1134.0px;font-size:32.5px;font-weight:700;color:#161513;">Additional Attributes</div>
<div class="t" style="left:599.8px;top:1237.1px;font-size:32.6px;font-weight:700;color:#161513;letter-spacing:0.2px">Item Attributes</div>
<div class="t" style="left:678.0px;top:1303.5px;font-size:18.6px;font-weight:700;color:#6B6865;">TPI Character Global</div>
<div class="t" style="left:678.0px;top:1329.5px;font-size:18.6px;font-weight:700;color:#6B6865;">Segment 1</div>
<div class="t" style="left:1028.4px;top:1310.0px;font-size:18.6px;font-weight:700;color:#6B6865;">zBIATPitemDFF</div>
<div class="t" style="left:1379.6px;top:1309.8px;font-size:18.6px;font-weight:700;color:#6B6865;">Mass XX</div>
<div class="t" style="left:1730.0px;top:1309.8px;font-size:18.6px;font-weight:700;color:#6B6865;">Vish_MPN</div>
<div class="t" style="left:2082.0px;top:1304.4px;font-size:18.6px;font-weight:700;color:#6B6865;">Context</div>
<div class="a" style="left:0px;top:0px;width:1px;height:1442px;background:rgba(255,255,255,0.13)"></div>
</body></html>
